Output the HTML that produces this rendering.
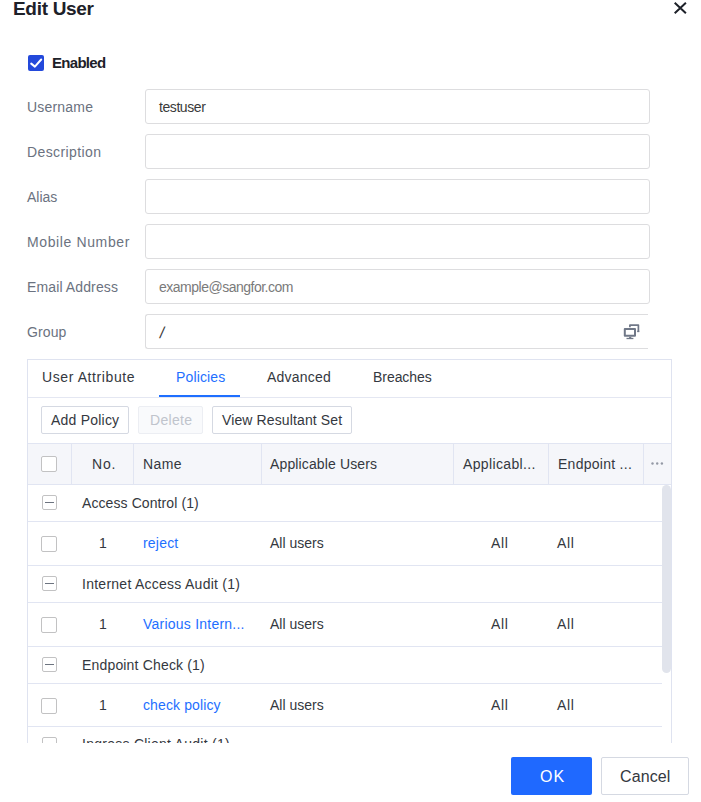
<!DOCTYPE html>
<html><head><meta charset="utf-8"><title>Edit User</title>
<style>
*{box-sizing:border-box;margin:0;padding:0}
html,body{width:701px;height:802px;background:#fff;overflow:hidden}
body{position:relative;font-family:"Liberation Sans",sans-serif;font-size:14px;color:#343840}
.abs{position:absolute;white-space:nowrap}
.title{font-size:19px;font-weight:bold;color:#1d2129;line-height:24px}
.lbl{left:27px;color:#6b7280;line-height:20px}
.inp{left:145px;width:505px;height:35px;border:1px solid #dddddf;border-radius:3px;background:#fff}
.itx{left:159px;line-height:20px;color:#3a3a3a}
.ph{color:#7a7a7a}
.panel{left:27px;top:359px;width:645px;height:384px;border:1px solid #dfe3f0;border-bottom:none}
.tab{top:367px;line-height:20px;color:#343840}
.btn{top:406px;height:28px;border:1px solid #d5d9e2;border-radius:2px;background:#fff}
.btx{top:410px;line-height:20px;color:#343840}
.th{top:454px;line-height:20px;color:#343840}
.vl{top:444px;width:1px;height:40px;background:#e1e5f2}
.row{left:28px;width:634px;border-bottom:1px solid #e1e5f2}
.cell{line-height:20px}
.link{color:#1e6fff}
.cb{width:16px;height:16px;border:1px solid #c2c2c3;border-radius:2px;background:#fff;left:41px}
</style></head><body>
<div class="abs title" style="left:13px;top:-3px;letter-spacing:-0.3px">Edit User</div>
<svg class="abs" style="left:673px;top:1px" width="15" height="15" viewBox="0 0 15 15"><path d="M1.7 1.7 L12.9 12.3 M12.9 1.7 L1.7 12.3" stroke="#1d2129" stroke-width="2" fill="none"/></svg>
<div class="abs" style="left:28px;top:55px;width:16px;height:16px;background:#2349db;border-radius:2px"></div>
<svg class="abs" style="left:28px;top:55px" width="16" height="16" viewBox="0 0 16 16"><path d="M3.2 8.6 L6.9 11.6 L13.2 4.5" stroke="#fff" stroke-width="2" stroke-linecap="round" stroke-linejoin="round" fill="none"/></svg>
<div class="abs " style="left:52px;top:53px;font-size:15px;font-weight:bold;line-height:20px;color:#1d2129;letter-spacing:-0.7px">Enabled</div>
<div class="abs lbl" style="top:97px;letter-spacing:0.2px">Username</div>
<div class="abs inp" style="top:89px"></div>
<div class="abs itx " style="top:97px;letter-spacing:-0.43px">testuser</div>
<div class="abs lbl" style="top:142px;letter-spacing:0.4px">Description</div>
<div class="abs inp" style="top:134px"></div>
<div class="abs lbl" style="top:187px">Alias</div>
<div class="abs inp" style="top:179px"></div>
<div class="abs lbl" style="top:232px;letter-spacing:0.62px">Mobile Number</div>
<div class="abs inp" style="top:224px"></div>
<div class="abs lbl" style="top:277px;letter-spacing:0.12px">Email Address</div>
<div class="abs inp" style="top:269px"></div>
<div class="abs itx ph" style="top:277px;letter-spacing:-0.5px">example@sangfor.com</div>
<div class="abs lbl" style="top:322px;letter-spacing:0.1px">Group</div>
<div class="abs inp" style="top:314px;width:503px;border-right:none;border-radius:3px 0 0 3px"></div>
<div class="abs itx " style="top:322px;font-size:16px;left:160px;margin-top:1px;transform:skewX(-10deg)">/</div>
<svg class="abs" style="left:620px;top:320px" width="24" height="24" viewBox="0 0 24 24" fill="none" stroke="#707888" stroke-linejoin="round"><rect x="4.8" y="9" width="10.2" height="6.8" stroke-width="2"/><path d="M10.2 16.8 V18.2" stroke-width="2.2"/><path d="M6.5 18.5 H13.4" stroke-width="1.3"/><path d="M9.9 7.2 V5.1 H18.4 V12.1" stroke-width="1.7"/><path d="M17.2 11.4 H19.25" stroke-width="1.5"/></svg>
<div class="abs panel"></div>
<div class="abs" style="left:28px;top:397px;width:643px;height:1px;background:#e4e7f2"></div>
<div class="abs tab" style="left:42px;letter-spacing:0.6px">User Attribute</div>
<div class="abs tab link" style="left:176px;letter-spacing:0.14px">Policies</div>
<div class="abs tab" style="left:267px;letter-spacing:0.2px">Advanced</div>
<div class="abs tab" style="left:373px;letter-spacing:-0.05px">Breaches</div>
<div class="abs" style="left:159px;top:395px;width:81px;height:2px;background:#1e6fff"></div>
<div class="abs btn" style="left:41px;width:88px"></div><div class="abs btx" style="left:51px;letter-spacing:0.22px">Add Policy</div>
<div class="abs btn" style="left:138px;width:65px;background:#f9fafc;border-color:#eceef3"></div><div class="abs btx" style="left:150px;color:#c0c4cc;letter-spacing:0.3px">Delete</div>
<div class="abs btn" style="left:212px;width:140px"></div><div class="abs btx" style="left:222px;letter-spacing:0.12px">View Resultant Set</div>
<div class="abs" style="left:28px;top:443px;width:643px;height:42px;background:#f5f6fa;border-top:1px solid #e1e5f2;border-bottom:1px solid #e1e5f2"></div>
<div class="abs vl" style="left:71px"></div><div class="abs vl" style="left:133px"></div><div class="abs vl" style="left:261px"></div><div class="abs vl" style="left:453px"></div><div class="abs vl" style="left:548px"></div><div class="abs vl" style="left:643px"></div>
<div class="abs cb" style="top:456px"></div>
<div class="abs th" style="left:92px;letter-spacing:0.8px">No.</div>
<div class="abs th" style="left:143px;letter-spacing:0.4px">Name</div>
<div class="abs th" style="left:270px;letter-spacing:0.13px">Applicable Users</div>
<div class="abs th" style="left:463px;letter-spacing:0.36px">Applicabl...</div>
<div class="abs th" style="left:558px;letter-spacing:0.27px">Endpoint ...</div>
<svg class="abs" style="left:650px;top:461px" width="14" height="5" viewBox="0 0 14 5" fill="#9499a5"><circle cx="2.5" cy="2.5" r="1.2"/><circle cx="7.2" cy="2.5" r="1.2"/><circle cx="11.9" cy="2.5" r="1.2"/></svg>
<div class="abs row" style="top:485px;height:37px"></div>
<div class="abs cb" style="top:495px;width:15px;height:15px;left:42px"></div><div class="abs" style="left:45px;top:502px;width:9px;height:1px;background:#6d7480"></div>
<div class="abs cell" style="left:82px;top:493px;letter-spacing:0.09px">Access Control (1)</div>
<div class="abs row" style="top:522px;height:44px"></div>
<div class="abs cb" style="top:536px"></div>
<div class="abs cell" style="left:99px;top:533px">1</div>
<div class="abs cell link" style="left:143px;top:533px;letter-spacing:0.2px">reject</div>
<div class="abs cell" style="left:270px;top:533px">All users</div>
<div class="abs cell" style="left:491px;top:533px;letter-spacing:0.7px">All</div>
<div class="abs cell" style="left:557px;top:533px;letter-spacing:0.7px">All</div>
<div class="abs row" style="top:566px;height:37px"></div>
<div class="abs cb" style="top:576px;width:15px;height:15px;left:42px"></div><div class="abs" style="left:45px;top:583px;width:9px;height:1px;background:#6d7480"></div>
<div class="abs cell" style="left:82px;top:574px;letter-spacing:0.26px">Internet Access Audit (1)</div>
<div class="abs row" style="top:603px;height:44px"></div>
<div class="abs cb" style="top:617px"></div>
<div class="abs cell" style="left:99px;top:614px">1</div>
<div class="abs cell link" style="left:143px;top:614px;letter-spacing:0.23px">Various Intern...</div>
<div class="abs cell" style="left:270px;top:614px">All users</div>
<div class="abs cell" style="left:491px;top:614px;letter-spacing:0.7px">All</div>
<div class="abs cell" style="left:557px;top:614px;letter-spacing:0.7px">All</div>
<div class="abs row" style="top:647px;height:37px"></div>
<div class="abs cb" style="top:657px;width:15px;height:15px;left:42px"></div><div class="abs" style="left:45px;top:664px;width:9px;height:1px;background:#6d7480"></div>
<div class="abs cell" style="left:82px;top:655px;letter-spacing:0.17px">Endpoint Check (1)</div>
<div class="abs row" style="top:684px;height:43px"></div>
<div class="abs cb" style="top:698px"></div>
<div class="abs cell" style="left:99px;top:695px">1</div>
<div class="abs cell link" style="left:143px;top:695px;letter-spacing:0.12px">check policy</div>
<div class="abs cell" style="left:270px;top:695px">All users</div>
<div class="abs cell" style="left:491px;top:695px;letter-spacing:0.7px">All</div>
<div class="abs cell" style="left:557px;top:695px;letter-spacing:0.7px">All</div>
<div class="abs row" style="top:727px;height:37px"></div>
<div class="abs cb" style="top:737px;width:15px;height:15px;left:42px"></div><div class="abs" style="left:45px;top:744px;width:9px;height:1px;background:#6d7480"></div>
<div class="abs cell" style="left:82px;top:734px;letter-spacing:0.26px">Ingress Client Audit (1)</div>
<div class="abs" style="left:662px;top:485px;width:9px;height:188px;background:#e1e4ec;border-radius:5px"></div>
<div class="abs" style="left:0;top:743px;width:701px;height:59px;background:#fff"></div>
<div class="abs" style="left:511px;top:757px;width:81px;height:38px;background:#1f69ff;border-radius:2px"></div><div class="abs " style="left:540px;top:767px;color:#fff;font-size:16px;line-height:20px;letter-spacing:1.0px">OK</div>
<div class="abs" style="left:601px;top:757px;width:88px;height:38px;border:1px solid #d5d9e2;border-radius:2px"></div><div class="abs " style="left:620px;top:767px;font-size:16px;line-height:20px;letter-spacing:0.1px">Cancel</div>
</body></html>
